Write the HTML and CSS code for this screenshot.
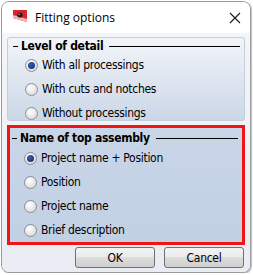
FILE: index.html
```html
<!DOCTYPE html>
<html lang="en">
<head>
<meta charset="UTF-8">
<title>Fitting options</title>
<link rel="stylesheet" href="styles.css">
</head>
<body>
<div class="window">
    <div class="titlebar">
        <svg class="app-icon" width="14" height="14" viewBox="0 0 14 14">
            <rect x="0" y="0" width="14" height="14" fill="#d9252a"/>
            <polygon points="0,14 0,8 14,12 14,14" fill="#ffffff"/>
            <polygon points="0,8 14,12 14,9 0,5" fill="#f2b3b3"/>
            <circle cx="7" cy="5" r="2.6" fill="#2a1a1a"/>
            <circle cx="6.3" cy="4.3" r="0.9" fill="#9a8a8a"/>
        </svg>
        <span class="title">Fitting options</span>
        <svg class="close" width="12" height="12" viewBox="0 0 12 12">
            <path d="M1 1 L11 11 M11 1 L1 11" stroke="#1a1a1a" stroke-width="1.1" fill="none"/>
        </svg>
    </div>
    <div class="content">
        <div class="group">
            <div class="group-head">
                <span class="dash"></span>
                <span class="group-title">Level of detail</span>
                <span class="rule"></span>
            </div>
            <div class="options">
                <label class="option"><span class="radio checked"></span>With all processings</label>
                <label class="option"><span class="radio"></span>With cuts and notches</label>
                <label class="option"><span class="radio"></span>Without processings</label>
            </div>
        </div>
        <div class="highlight">
            <div class="group group-active">
                <div class="group-head">
                    <span class="dash"></span>
                    <span class="group-title">Name of top assembly</span>
                    <span class="rule"></span>
                </div>
                <div class="options">
                    <label class="option"><span class="radio checked"></span>Project name + Position</label>
                    <label class="option"><span class="radio"></span>Position</label>
                    <label class="option"><span class="radio"></span>Project name</label>
                    <label class="option"><span class="radio"></span>Brief description</label>
                </div>
            </div>
        </div>
        <div class="buttons">
            <button class="btn">OK</button>
            <button class="btn">Cancel</button>
        </div>
    </div>
</div>
</body>
</html>
```

FILE: styles.css
```css
body {
    margin: 0;
    background: #ffffff;
    font-family: "DejaVu Sans Condensed", "DejaVu Sans", sans-serif;
    font-stretch: condensed;
    font-size: 12px;
    letter-spacing: -0.3px;
    color: #000000;
}
.window {
    margin: 1px 0 0 1px;
    width: 248px;
    height: 270px;
    border: 1px solid #9c9c9c;
    border-radius: 8px;
    overflow: hidden;
    background: #eef1f5;
    display: flex;
    flex-direction: column;
    box-shadow: 1px 1px 1px rgba(0, 0, 0, 0.25);
}
.titlebar {
    height: 31px;
    background: #ffffff;
    display: flex;
    align-items: center;
    padding-left: 11px;
    padding-right: 9px;
}
.app-icon {
    margin-top: -1px;
}
.title {
    margin-left: 8px;
    font-family: "Open Sans", "Noto Sans", sans-serif;
    font-stretch: normal;
    font-size: 12px;
    letter-spacing: 0;
    flex: 1;
}
.close {
    margin-top: 1px;
}
.content {
    flex: 1;
    padding: 4px 5px 0 5px;
    background: linear-gradient(#f3f5f8, #e9edf3);
}
.group {
    height: 82px;
    border: 1px solid #c3cddb;
    border-radius: 3px;
    background: linear-gradient(#f2f5f9, #cbd7e7);
}
.group-head {
    height: 16px;
    display: flex;
    align-items: center;
    padding: 0 4px 0 5px;
}
.dash {
    width: 5px;
    height: 1px;
    background: #000000;
}
.group-title {
    font-weight: bold;
    margin: 0 6px 0 3px;
}
.rule {
    flex: 1;
    height: 1px;
    background: #000000;
}
.options {
    display: flex;
    flex-direction: column;
    gap: 10px;
    padding: 4px 0 0 17px;
}
.option {
    height: 14px;
    display: flex;
    align-items: center;
}
.radio {
    box-sizing: border-box;
    width: 13px;
    height: 13px;
    border-radius: 50%;
    border: 1px solid #8e8f8f;
    background: radial-gradient(circle at 40% 35%, #ffffff, #e4e4e4 60%, #cfcfcf);
    margin-right: 4px;
    position: relative;
}
.radio.checked::after {
    content: "";
    position: absolute;
    left: 2px;
    top: 2px;
    width: 7px;
    height: 7px;
    border-radius: 50%;
    background: radial-gradient(circle at 40% 35%, #3c5cb0, #0f2a78);
}
.highlight {
    margin-top: 4px;
    height: 114px;
    border: 3px solid #f01414;
    background: #c6d4e7;
}
.group-active {
    height: 114px;
    border: none;
    border-radius: 0;
    background: linear-gradient(#c9d6e8, #c2d0e4);
    padding-top: 2px;
    box-sizing: border-box;
}
.group-active .group-head {
    padding-left: 2px;
}
.group-active .options {
    padding-top: 5px;
    padding-left: 14px;
}
.buttons {
    display: flex;
    justify-content: flex-end;
    gap: 9px;
    margin-top: 2px;
    padding-right: 1px;
}
.btn {
    width: 80px;
    height: 21px;
    border: 1px solid #707070;
    border-radius: 3px;
    background: linear-gradient(#f4f4f4 0%, #ebebeb 45%, #dddddd 50%, #cfcfcf 100%);
    font-family: "DejaVu Sans Condensed", "DejaVu Sans", sans-serif;
    font-stretch: condensed;
    font-size: 12px;
    letter-spacing: -0.3px;
    color: #000000;
    padding: 0;
}
```
